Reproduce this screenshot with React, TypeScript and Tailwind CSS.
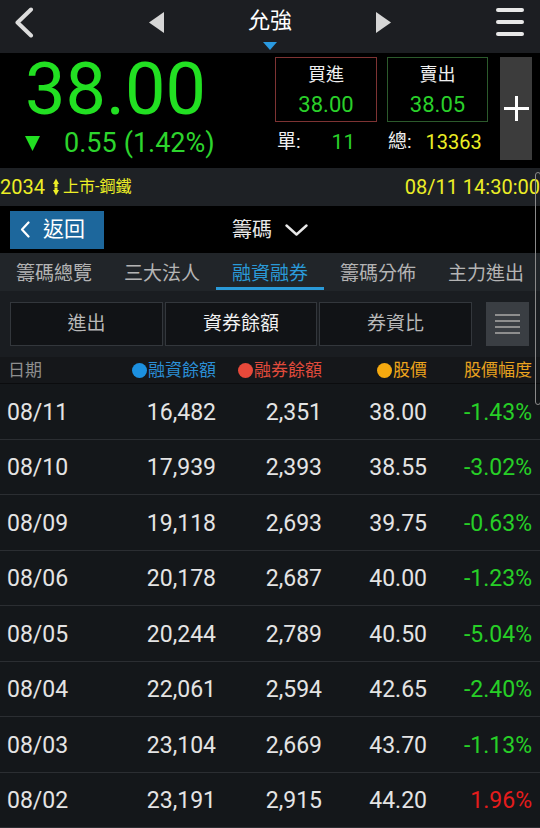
const TABS = ["籌碼總覽", "三大法人", "融資融券", "籌碼分佈", "主力進出"];

const ROWS: [string, string, string, string, string][] = [
  ["08/11", "16,482", "2,351", "38.00", "-1.43%"],
  ["08/10", "17,939", "2,393", "38.55", "-3.02%"],
  ["08/09", "19,118", "2,693", "39.75", "-0.63%"],
  ["08/06", "20,178", "2,687", "40.00", "-1.23%"],
  ["08/05", "20,244", "2,789", "40.50", "-5.04%"],
  ["08/04", "22,061", "2,594", "42.65", "-2.40%"],
  ["08/03", "23,104", "2,669", "43.70", "-1.13%"],
  ["08/02", "23,191", "2,915", "44.20", "1.96%"],
];

function TopBar() {
  return (
    <div className="flex h-[53px] items-start bg-[#1c1e22]">
      <svg className="ml-[14px] mt-[7px] h-[31px] w-[20px]" viewBox="0 0 20 31">
        <path
          d="M17 2.5 L3.5 15.5 L17 28.5"
          fill="none"
          stroke="#dcdcdc"
          strokeWidth="4"
          strokeLinecap="round"
          strokeLinejoin="round"
        />
      </svg>
      <svg className="ml-[115px] mt-[12px] h-[21px] w-[15px]" viewBox="0 0 15 21">
        <path d="M15 0 L0 10.5 L15 21Z" fill="#d6d6d6" />
      </svg>
      <div className="flex w-[212px] flex-col items-center pt-[6px]">
        <span className="text-[22px] leading-[30px] text-white">允強</span>
        <svg className="mt-[6px] h-[8px] w-[14px]" viewBox="0 0 14 8">
          <path d="M0 0H14L7 8Z" fill="#2a9ae0" />
        </svg>
      </div>
      <svg className="mt-[12px] h-[21px] w-[15px]" viewBox="0 0 15 21">
        <path d="M0 0 L15 10.5 L0 21Z" fill="#d6d6d6" />
      </svg>
      <div className="ml-[105px] mt-[8px] flex w-[28px] flex-col gap-[8px]">
        <div className="h-[4px] rounded-full bg-[#e8e8e8]" />
        <div className="h-[4px] rounded-full bg-[#e8e8e8]" />
        <div className="h-[4px] rounded-full bg-[#e8e8e8]" />
      </div>
    </div>
  );
}

function QuoteBox({ label, value, border, w }: { label: string; value: string; border: string; w: string }) {
  return (
    <div className={`flex h-[65px] flex-col items-center border pt-[6px] ${border} ${w}`}>
      <span className="text-[18px] leading-[22px] text-[#f0f0f0]">{label}</span>
      <span className="mt-[6px] text-[22px] leading-[26px] text-[#2ad02a]">{value}</span>
    </div>
  );
}

function Quote() {
  return (
    <div className="flex h-[115px] bg-black">
      <div className="w-[270px] pl-[25px] pt-[5px]">
        <div className="text-[72px] leading-[64px] text-[#22e022]">38.00</div>
        <div className="mt-[8px] flex items-center text-[27px] leading-none text-[#2dd42d]">
          <svg className="h-[15px] w-[15px]" viewBox="0 0 15 15">
            <path d="M0 0H15L7.5 15Z" fill="#22e022" />
          </svg>
          <span className="ml-[24px]">0.55</span>
          <span className="ml-[7px]">(1.42%)</span>
        </div>
      </div>
      <div className="flex flex-col pl-[5px] pt-[4px]">
        <div className="flex gap-[10px]">
          <QuoteBox label="買進" value="38.00" border="border-[#7e3333]" w="w-[102px]" />
          <QuoteBox label="賣出" value="38.05" border="border-[#2c5a2c]" w="w-[101px]" />
        </div>
        <div className="mt-[8px] flex items-center leading-[24px]">
          <div className="flex w-[112px] items-center pl-[2px]">
            <span className="text-[19px] text-[#f0f0f0]">單:</span>
            <span className="ml-[31px] text-[21px] text-[#2ad02a]">11</span>
          </div>
          <div className="flex items-center pl-[1px]">
            <span className="text-[19px] text-[#f0f0f0]">總:</span>
            <span className="ml-[14px] text-[20px] text-[#ecee24]">13363</span>
          </div>
        </div>
      </div>
      <div className="ml-[12px] mt-[4px] flex h-[103px] w-[32px] items-center justify-center bg-[#3c3c3c]">
        <svg className="h-[25px] w-[25px]" viewBox="0 0 25 25">
          <path d="M12.5 0V25M0 12.5H25" stroke="#ffffff" strokeWidth="3" />
        </svg>
      </div>
    </div>
  );
}

function Ticker() {
  return (
    <div className="flex h-[38px] items-center bg-[#1e2125] text-[#ecee26]">
      <span className="text-[20px] leading-none">2034</span>
      <svg className="ml-[8px] h-[18px] w-[6px]" viewBox="0 0 6 18">
        <path d="M0 6 L3 0.5 L6 6Z" fill="#ecee26" />
        <rect x="1.5" y="6" width="3" height="3" fill="#ecee26" />
        <rect x="1.5" y="9.5" width="3" height="3" fill="#ecee26" />
        <path d="M0 12 L3 17.5 L6 12Z" fill="#ecee26" />
      </svg>
      <span className="ml-[4px] text-[16px] leading-none">上市-鋼鐵</span>
      <span className="ml-auto whitespace-nowrap text-[20px] leading-none">08/11 14:30:00</span>
    </div>
  );
}

function BackRow() {
  return (
    <div className="grid h-[47px] grid-cols-[1fr_auto_1fr] items-center bg-black">
      <div className="pl-[10px]">
        <div className="flex h-[38px] w-[94px] items-center bg-[#1d679c]">
          <svg className="ml-[10px] h-[17px] w-[10px]" viewBox="0 0 10 17">
            <path
              d="M8.5 1.5 L2 8.5 L8.5 15.5"
              fill="none"
              stroke="#ffffff"
              strokeWidth="2.2"
              strokeLinecap="round"
              strokeLinejoin="round"
            />
          </svg>
          <span className="ml-[13px] text-[21px] leading-none text-white">返回</span>
        </div>
      </div>
      <div className="flex items-center">
        <span className="text-[20px] leading-none text-[#e8e8e8]">籌碼</span>
        <svg className="ml-[13px] h-[12px] w-[23px]" viewBox="0 0 23 12">
          <path
            d="M1.5 1.5 L11.5 10.5 L21.5 1.5"
            fill="none"
            stroke="#e8e8e8"
            strokeWidth="2.4"
            strokeLinecap="round"
            strokeLinejoin="round"
          />
        </svg>
      </div>
      <div />
    </div>
  );
}

function Tabs() {
  return (
    <div className="flex h-[38px] bg-[#212529]">
      {TABS.map((t, i) => {
        const active = i === 2;
        return (
          <div key={t} className="flex w-[108px] flex-col items-center pt-[10px]">
            <span className={`text-[19px] leading-[22px] ${active ? "text-[#2a9ad8]" : "text-[#b4b4b4]"}`}>{t}</span>
            {active && <div className="mb-[1px] mt-auto h-[3px] w-full bg-[#2a9ad8]" />}
          </div>
        );
      })}
    </div>
  );
}

function Segments() {
  const segs = [
    { t: "進出", w: "w-[153px]", c: "text-[#b8b8b8]" },
    { t: "資券餘額", w: "w-[152px]", c: "text-[#f0f0f0]" },
    { t: "券資比", w: "w-[153px]", c: "text-[#b8b8b8]" },
  ];
  return (
    <div className="flex h-[66px] items-center bg-[#1a1d21] pl-[10px]">
      <div className="flex gap-[2px]">
        {segs.map((s) => (
          <div
            key={s.t}
            className={`flex h-[44px] items-center justify-center border border-[#33373c] bg-[#111316] text-[19px] ${s.w} ${s.c}`}
          >
            {s.t}
          </div>
        ))}
      </div>
      <div className="ml-[14px] flex h-[44px] w-[43px] flex-col items-center justify-center gap-[4px] bg-[#3a3e43]">
        <div className="h-[2px] w-[25px] bg-[#8e8e8e]" />
        <div className="h-[2px] w-[25px] bg-[#8e8e8e]" />
        <div className="h-[2px] w-[25px] bg-[#8e8e8e]" />
        <div className="h-[2px] w-[25px] bg-[#8e8e8e]" />
      </div>
    </div>
  );
}

function Dot({ color }: { color: string }) {
  return <span className={`mr-[1px] inline-block h-[15px] w-[15px] rounded-full ${color}`} />;
}

function Table() {
  return (
    <div>
      <div className="flex h-[27px] items-center border-b border-[#0b0c0e] bg-[#15171a] text-[17px] leading-none">
        <div className="w-[100px] pl-[8px] text-[#8e8e8e]">日期</div>
        <div className="flex w-[116px] items-center justify-end text-[#2b8fd6]">
          <Dot color="bg-[#1c90e0]" />
          融資餘額
        </div>
        <div className="flex w-[106px] items-center justify-end text-[#e04b3c]">
          <Dot color="bg-[#e8493a]" />
          融券餘額
        </div>
        <div className="flex w-[105px] items-center justify-end text-[#eea51c]">
          <Dot color="bg-[#f5a90f]" />
          股價
        </div>
        <div className="w-[105px] text-right text-[#e8a21f]">股價幅度</div>
      </div>
      {ROWS.map((r) => {
        const up = !r[4].startsWith("-");
        return (
          <div
            key={r[0]}
            className="flex h-[55.5px] items-center border-b border-[#2b2e32] bg-[#14171a] pt-[2px] text-[23px] leading-none text-[#e4e4e4]"
          >
            <div className="w-[100px] pl-[7px]">{r[0]}</div>
            <div className="w-[116px] text-right">{r[1]}</div>
            <div className="w-[106px] text-right">{r[2]}</div>
            <div className="w-[105px] text-right">{r[3]}</div>
            <div className={`w-[105px] text-right ${up ? "text-[#e41c1c]" : "text-[#27cf27]"}`}>{r[4]}</div>
          </div>
        );
      })}
    </div>
  );
}

export default function App() {
  return (
    <div className="relative h-[828px] w-[540px] overflow-hidden bg-[#14171a] font-[Roboto,Noto_Sans_CJK_TC,sans-serif] text-white">
      <TopBar />
      <Quote />
      <Ticker />
      <BackRow />
      <Tabs />
      <Segments />
      <Table />
      <div className="absolute left-[535px] top-[172px] h-[233px] w-[6px] rounded-[3px] border border-[#8a8a8a]" />
    </div>
  );
}
